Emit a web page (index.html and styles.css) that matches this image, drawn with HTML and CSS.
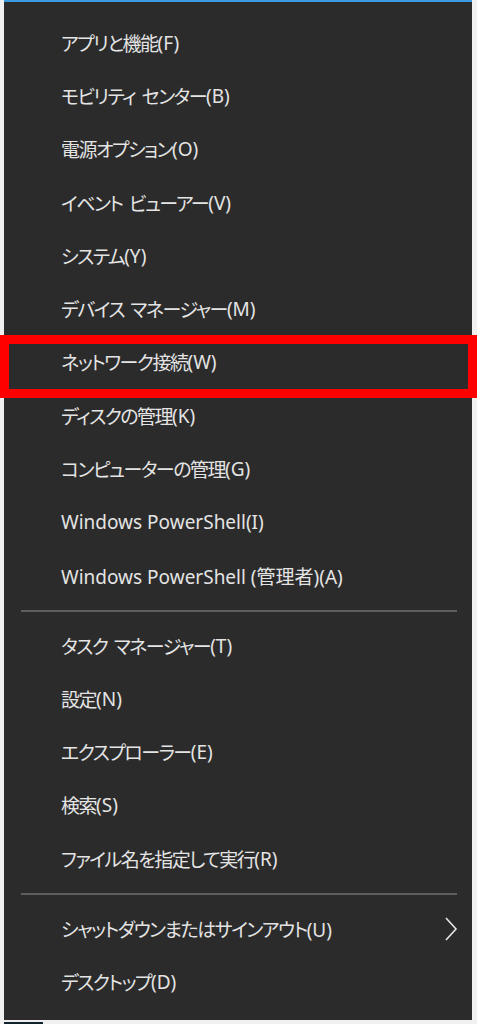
FILE: index.html
```html
<!DOCTYPE html>
<html lang="ja">
<head>
<meta charset="utf-8">
<title>Win+X Menu</title>
<link rel="stylesheet" href="styles.css">
</head>
<body>
<div class="frame">
  <div class="panel">
    <ul class="group">
      <li class="item">アプリと機能<span class="lat">(F)</span></li>
      <li class="item">モビリティ センター<span class="lat">(B)</span></li>
      <li class="item">電源オプション<span class="lat">(O)</span></li>
      <li class="item">イベント ビューアー<span class="lat">(V)</span></li>
      <li class="item">システム<span class="lat">(Y)</span></li>
      <li class="item">デバイス マネージャー<span class="lat">(M)</span></li>
      <li class="item">ネットワーク接続<span class="lat">(W)</span></li>
      <li class="item">ディスクの管理<span class="lat">(K)</span></li>
      <li class="item">コンピューターの管理<span class="lat">(G)</span></li>
      <li class="item"><span class="lat">Windows PowerShell(I)</span></li>
      <li class="item"><span class="lat">Windows PowerShell (管理者)(A)</span></li>
    </ul>
    <div class="sep"><span class="sep-line"></span></div>
    <ul class="group">
      <li class="item">タスク マネージャー<span class="lat">(T)</span></li>
      <li class="item">設定<span class="lat">(N)</span></li>
      <li class="item">エクスプローラー<span class="lat">(E)</span></li>
      <li class="item">検索<span class="lat">(S)</span></li>
      <li class="item">ファイル名を指定して実行<span class="lat">(R)</span></li>
    </ul>
    <div class="sep"><span class="sep-line"></span></div>
    <ul class="group">
      <li class="item has-sub"><span class="label">シャットダウンまたはサインアウト<span class="lat">(U)</span></span>
        <svg class="chev" width="14" height="26" viewBox="0 0 14 26"><path d="M2 2 L12 13 L2 24" fill="none" stroke="#e8e8e8" stroke-width="1.6"/></svg>
      </li>
      <li class="item">デスクトップ<span class="lat">(D)</span></li>
    </ul>
  </div>
  <div class="taskbar-bit"></div>
  <div class="highlight"></div>
</div>
</body>
</html>
```
FILE: styles.css
```css
html, body {
  margin: 0;
  padding: 0;
  background: #f0f0f0;
  width: 477px;
  height: 1024px;
  overflow: hidden;
}
.frame {
  position: relative;
  width: 477px;
  height: 1024px;
  padding-left: 4px;
  box-sizing: border-box;
}
.panel {
  width: 468px;
  height: 1020px;
  box-sizing: border-box;
  background: #2b2b2b;
  border-top: 2px solid #3a9be0;
  padding-top: 14px;
  font-family: "Noto Sans", "Noto Sans CJK JP", sans-serif;
  font-feature-settings: "palt";
  font-size: 19px;
  color: #e4e4e4;
}
.group {
  list-style: none;
  margin: 0;
  padding: 0;
}
.item {
  height: 53.3px;
  display: flex;
  align-items: center;
  padding-left: 57px;
  padding-right: 14px;
  white-space: pre;
  letter-spacing: -1.5px;
  word-spacing: 3px;
}
.lat {
  letter-spacing: 0;
  word-spacing: 0;
}
.has-sub {
  justify-content: space-between;
}
.chev {
  display: block;
}
.sep {
  height: 16.7px;
  display: flex;
  align-items: center;
  padding-left: 17px;
}
.sep-line {
  display: block;
  width: 436px;
  height: 2px;
  background: #5e5e5e;
}
.taskbar-bit {
  margin-top: 2px;
  width: 39px;
  height: 2px;
  background: #10222c;
}
.highlight {
  position: absolute;
  left: 0;
  top: 335px;
  width: 477px;
  height: 63px;
  box-sizing: border-box;
  border: 9px solid #ff0000;
}
```
